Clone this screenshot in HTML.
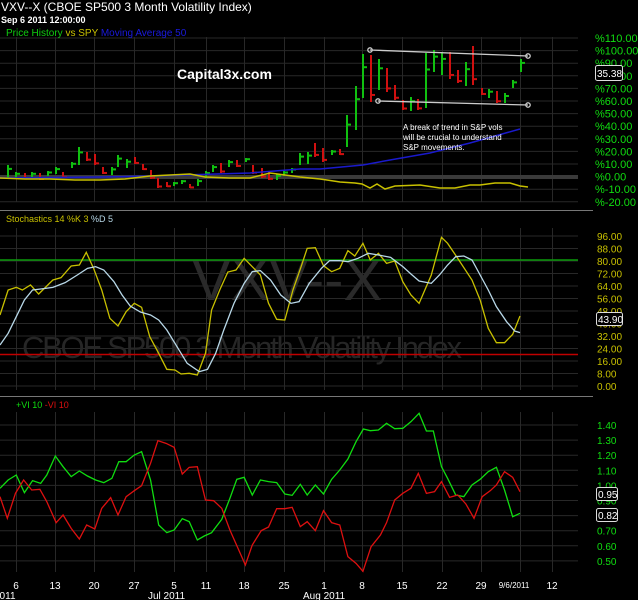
<!DOCTYPE html>
<html><head><meta charset="utf-8"><style>
html,body{margin:0;padding:0;background:#000;}
body{width:638px;height:600px;overflow:hidden;position:relative;font-family:"Liberation Sans",sans-serif;}
svg{position:absolute;left:0;top:0;}
text{font-family:"Liberation Sans",sans-serif;}
</style></head><body>
<svg id="s" width="638" height="600" viewBox="0 0 638 600" xmlns="http://www.w3.org/2000/svg">
<rect width="638" height="600" fill="#000"/>
<g id="grid" stroke="#282828" stroke-width="1"></g>
<!-- watermark -->
<text x="192" y="300" font-size="58" fill="#2a2a2a">VXV--X</text>
<text x="22" y="358" font-size="31" fill="#262626" textLength="440" lengthAdjust="spacing">CBOE SP500 3 Month Volatility Index</text>
<!-- zero band -->
<rect x="0" y="175" width="578" height="4" fill="#3a3a3a"/>
<!-- dividers -->
<line x1="0" y1="210.5" x2="593" y2="210.5" stroke="#777"/>
<line x1="0" y1="396.5" x2="593" y2="396.5" stroke="#777"/>
<!-- stoch levels -->
<line x1="0" y1="260" x2="578" y2="260" stroke="#0a9a0a" stroke-width="1.5"/>
<line x1="0" y1="354.5" x2="578" y2="354.5" stroke="#c00000" stroke-width="1.5"/>
<g id="bars" stroke-width="2"></g>
<polyline id="ma" fill="none" stroke="#1a1acc" stroke-width="1.5"/>
<polyline id="spy" fill="none" stroke="#c8c000" stroke-width="1.5"/>
<!-- trend lines -->
<g stroke="#ccc" stroke-width="1.3" fill="none">
<line x1="370" y1="50" x2="528" y2="56"/><line x1="378" y1="101" x2="528" y2="105"/>
<circle cx="370" cy="50" r="2.2"/><circle cx="528" cy="56" r="2.2"/><circle cx="378" cy="101" r="2.2"/><circle cx="528" cy="105" r="2.2"/>
</g>
<svg x="0" y="200" width="638" height="200" viewBox="0 0 1568 600" preserveAspectRatio="none">
<polyline id="k" fill="none" stroke="#c8c000" stroke-width="1.3" vector-effect="non-scaling-stroke"/>
<polyline id="d" fill="none" stroke="#b8d8e8" stroke-width="1.3" vector-effect="non-scaling-stroke"/>
</svg>
<svg x="0" y="400" width="638" height="200" viewBox="0 0 1568 600" preserveAspectRatio="none">
<polyline id="vp" fill="none" stroke="#10dd10" stroke-width="1.3" vector-effect="non-scaling-stroke"/>
<polyline id="vm" fill="none" stroke="#dd1010" stroke-width="1.3" vector-effect="non-scaling-stroke"/>
</svg>
<!-- header -->
<text x="1" y="11" font-size="12" fill="#fff">VXV--X (CBOE SP500 3 Month Volatility Index)</text>
<text x="1" y="23" font-size="9" font-weight="bold" fill="#fff">Sep 6 2011 12:00:00</text>
<text x="6" y="36" font-size="10"><tspan fill="#10cc10">Price History</tspan><tspan fill="#c8c000"> vs SPY</tspan><tspan fill="#1a1add"> Moving Average 50</tspan></text>
<text x="177" y="79" font-size="14" font-weight="bold" fill="#fff">Capital3x.com</text>
<text font-size="8" fill="#fff"><tspan x="403" y="130">A break of trend in S&amp;P vols</tspan><tspan x="403" y="140">will be crucial to understand</tspan><tspan x="403" y="150">S&amp;P movements.</tspan></text>
<text x="6" y="222" font-size="9"><tspan fill="#c8c000">Stochastics 14 %K 3 </tspan><tspan fill="#b8d8e8"> %D 5</tspan></text>
<text x="16" y="408" font-size="9"><tspan fill="#10dd10">+VI 10 </tspan><tspan fill="#dd1010">-VI 10</tspan></text>
<g id="labels"></g>
<!-- value boxes -->
<g font-size="10" fill="#fff">
<rect x="595.5" y="65.5" width="27" height="15" rx="2" fill="#000" stroke="#ddd"/><text x="597" y="77">35.38</text>
<rect x="596.5" y="312.5" width="26" height="13" rx="2" fill="#000" stroke="#ddd"/><text x="598" y="323">43.90</text>
<rect x="596.5" y="487.5" width="21" height="13" rx="2" fill="#000" stroke="#ddd"/><text x="598" y="498">0.95</text>
<rect x="596.5" y="508.5" width="21" height="13" rx="2" fill="#000" stroke="#ddd"/><text x="598" y="519">0.82</text>
</g>
</svg>
<script>
var NS="http://www.w3.org/2000/svg";
function el(p,t,a,txt){var e=document.createElementNS(NS,t);for(var k in a)e.setAttribute(k,a[k]);if(txt)e.textContent=txt;document.getElementById(p).appendChild(e);return e;}
var vx=[16,55,94,134,174,206,244,284,324,362,402,442,481,520,552];
vx.forEach(function(x){[[37,202],[228,390],[412,572]].forEach(function(r){el("grid","line",{x1:x+.5,y1:r[0],x2:x+.5,y2:r[1]});});});
var mainL=["%110.00","%100.00","%90.00","%80.00","%70.00","%60.00","%50.00","%40.00","%30.00","%20.00","%10.00","%0.00","%-10.00","%-20.00"];
mainL.forEach(function(t,i){var y=38+i*12.6;el("grid","line",{x1:0,y1:y,x2:578,y2:y});el("labels","text",{x:595,y:y+4,"font-size":11,fill:"#10dd10"},t);});
for(var i=0;i<=12;i++){var v=96-i*8,y=236+i*12.5;el("grid","line",{x1:0,y1:y,x2:578,y2:y});el("labels","text",{x:597,y:y+4,"font-size":10,fill:"#c8c000"},v.toFixed(2));}
for(var i=0;i<=9;i++){var v=1.4-i*0.1,y=425+i*15.1;el("grid","line",{x1:0,y1:y,x2:578,y2:y});el("labels","text",{x:597,y:y+4,"font-size":10,fill:"#10dd10"},v.toFixed(2));}
var days=["6","13","20","27","5","11","18","25","1","8","15","22","29","","12"];
days.forEach(function(d,i){if(d)el("labels","text",{x:vx[i],y:589,"font-size":10,fill:"#fff","text-anchor":"middle"},d);});
el("labels","text",{x:514,y:588,"font-size":8,fill:"#fff","text-anchor":"middle"},"9/6/2011");
[["2011",-6],["Jul 2011",148],["Aug 2011",303]].forEach(function(m){el("labels","text",{x:m[1],y:599,"font-size":10,fill:"#fff"},m[0]);});
var B=[[8,165,178,1],[16,172,178,1],[25,173,179,0],[32,172,178,1],[40,173,180,0],[48,171,176,1],[56,167,174,1],[63,172,178,0],[72,162,168,1],[79,147,165,1],[87,152,161,0],[95,154,165,0],[103,167,174,0],[112,167,175,1],[118,155,167,1],[127,159,168,1],[135,157,164,0],[143,164,170,0],[151,170,179,0],[158,178,188,0],[167,182,187,0],[174,182,186,1],[182,180,184,1],[190,184,188,0],[198,179,186,1],[206,171,178,1],[213,165,172,1],[221,163,173,0],[229,160,167,1],[237,160,167,0],[246,158,162,1],[253,165,174,0],[262,168,178,0],[269,172,180,0],[277,174,180,1],[284,171,176,1],[292,168,173,1],[300,153,165,1],[308,152,164,1],[315,143,157,0],[323,148,162,0],[332,150,155,1],[340,149,155,0],[347,115,147,1],[356,86,130,1],[363,54,98,1],[371,55,102,0],[379,59,90,1],[387,68,92,0],[395,85,100,0],[403,100,110,0],[411,97,111,1],[418,99,110,0],[426,53,108,1],[434,50,72,1],[442,52,75,1],[450,52,79,0],[458,70,83,0],[466,62,86,1],[473,46,85,0],[482,88,95,0],[489,89,98,1],[497,91,103,0],[505,93,103,1],[513,80,88,1],[521,59,72,1]];
B.forEach(function(b){var c=b[3]?"#10c010":"#d01010",h=b[2]-b[1],x=b[0];
el("bars","line",{x1:x,y1:b[1],x2:x,y2:b[2],stroke:c});
var cy=b[3]?b[1]+h*0.3:b[1]+h*0.85;el("bars","line",{x1:x,y1:cy,x2:x+4,y2:cy,stroke:c});});
function pl(id,a){var s=[];for(var i=0;i<a.length;i+=2)s.push(a[i]+","+a[i+1]);document.getElementById(id).setAttribute("points",s.join(" "));}
pl("ma",[0,178,100,177,150,176,250,173,300,169,320,169,363,165,390,160,430,153,470,143,520,129]);
pl("spy",[0,178,25,179,50,179,75,180,100,180,125,179,150,176,170,175,190,174,205,177,230,178,250,178,270,173,285,175,300,177,320,179,327,180,340,182,355,183,362,184,370,188,377,184,385,189,395,186,420,185,440,188,455,188,470,185,480,185,495,183,510,183,520,186,528,187]);
pl("k",[0,345,20,270,40,262,55,270,75,255,95,282,115,258,130,240,150,233,175,198,195,195,212,157,230,205,250,270,270,355,290,378,310,335,330,310,348,322,368,410,390,460,410,508,430,510,445,522,465,520,485,525,505,460,520,330,540,270,560,216,580,210,600,175,620,200,640,225,660,310,680,358,700,360,720,270,740,200,755,145,775,143,795,197,815,215,835,205,855,152,872,168,892,130,910,180,930,160,950,190,970,183,990,245,1010,285,1030,310,1060,225,1085,112,1100,130,1125,175,1160,240,1180,300,1200,385,1220,428,1240,428,1260,403,1278,348]);
pl("d",[0,435,20,400,40,350,60,300,80,270,100,267,130,262,160,248,190,225,215,205,235,200,255,210,280,245,300,285,320,318,345,336,370,345,390,360,410,390,430,430,460,490,490,515,510,508,530,460,550,390,575,310,600,250,620,215,640,212,665,240,690,285,715,310,735,305,760,250,790,205,810,182,835,182,855,185,880,175,905,160,930,165,960,172,990,200,1010,222,1030,243,1060,250,1080,225,1100,195,1120,170,1140,168,1160,180,1180,225,1200,270,1220,320,1245,365,1265,393,1278,398]);
pl("vp",[0,265,20,240,40,225,60,278,80,242,100,250,115,225,136,168,155,200,175,230,195,213,215,228,235,240,255,248,275,235,292,185,310,185,330,165,348,155,370,240,390,375,410,398,428,390,448,356,465,365,485,420,502,408,520,398,545,358,565,295,582,238,600,232,620,285,640,240,660,245,680,248,700,282,718,286,738,253,755,285,775,255,795,282,815,238,835,210,855,177,875,125,893,87,910,92,930,90,950,70,970,86,990,85,1010,65,1030,40,1048,93,1065,93,1085,200,1100,235,1120,285,1140,290,1160,255,1180,238,1200,215,1220,202,1240,270,1260,350,1278,340]);
pl("vm",[0,290,18,355,38,280,58,240,78,270,98,268,115,305,138,368,155,345,175,385,195,417,213,375,233,387,250,325,272,293,290,345,310,290,330,272,348,257,370,190,388,122,408,130,428,142,448,222,465,202,485,200,505,300,525,302,545,325,565,390,585,445,603,495,620,435,642,392,660,381,680,326,700,326,718,322,738,380,755,365,775,392,795,332,815,368,835,375,855,470,875,490,892,514,912,440,935,405,950,368,970,300,990,280,1010,265,1028,220,1048,280,1068,275,1085,245,1105,292,1125,285,1145,312,1165,355,1185,290,1205,272,1220,255,1240,215,1260,232,1278,275]);
</script>
</body></html>
